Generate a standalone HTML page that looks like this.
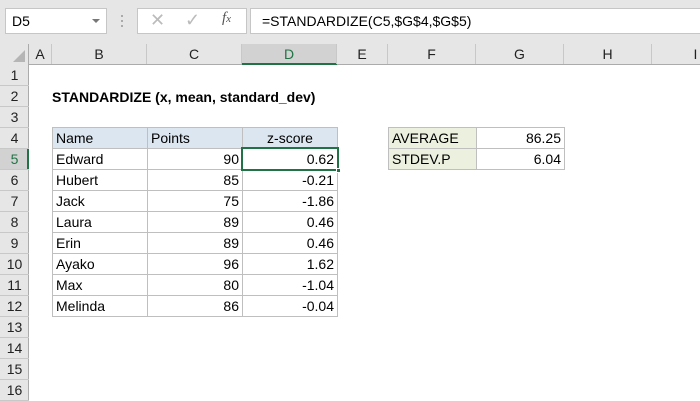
<!DOCTYPE html><html><head><style>
body{margin:0;width:700px;height:400px;overflow:hidden;background:#fff;font-family:"Liberation Sans",Arial,sans-serif;position:relative}
.a{position:absolute;box-sizing:border-box}
.t{font-size:14px;color:#000;white-space:nowrap;line-height:20px}
.ch{font-size:14px;color:#222;text-align:center;line-height:20px}
</style></head><body>
<div class="a" style="left:0;top:0;width:700px;height:44px;background:#e6e6e6"></div>
<div class="a" style="left:5px;top:8px;width:102px;height:26px;background:#fff;border:1px solid #c6c6c6"></div>
<div class="a t" style="left:12px;top:11px">D5</div>
<div class="a" style="left:92px;top:19px;width:0;height:0;border-left:4px solid transparent;border-right:4px solid transparent;border-top:4px solid #777"></div>
<div class="a" style="left:121px;top:15px;width:2px;height:2px;background:#aaa;box-shadow:0 5px #aaa,0 10px #aaa"></div>
<div class="a" style="left:137px;top:8px;width:110px;height:26px;background:#fff;border:1px solid #c6c6c6"></div>
<div class="a" style="left:150px;top:10px;font-size:18px;color:#bbb">✕</div>
<div class="a" style="left:185px;top:10px;font-size:18px;color:#bbb">✓</div>
<div class="a" style="left:222px;top:10px;font-size:15px;font-style:italic;font-family:'Liberation Serif',serif;color:#555">f<span style="font-size:11px">x</span></div>
<div class="a" style="left:250px;top:8px;width:452px;height:26px;background:#fff;border:1px solid #c6c6c6"></div>
<div class="a t" style="left:262px;top:11px">=STANDARDIZE(C5,$G$4,$G$5)</div>
<!-- col headers -->
<div class="a" style="left:0;top:44px;width:700px;height:21px;background:#e6e6e6;border-bottom:1px solid #ababab"></div>
<div class="a" style="left:0;top:44px;width:29px;height:356px;background:#e6e6e6;border-right:1px solid #ababab"></div>
<div class="a" style="left:13px;top:50px;width:0;height:0;border-left:12px solid transparent;border-bottom:12px solid #b5b5b5"></div>
<div class="a" style="left:242px;top:44px;width:95px;height:21px;background:#d2d2d2;border-bottom:2px solid #217346"></div>
<div class="a" style="left:0;top:148px;width:29px;height:21px;background:#d2d2d2;border-right:2px solid #217346"></div>
<div id="cols"></div><div id="rows"></div>
<script>
var c=[[29,52,'A'],[52,147,'B'],[147,242,'C'],[242,337,'D'],[337,388,'E'],[388,476,'F'],[476,564,'G'],[564,652,'H'],[652,740,'I']],h='';
c.forEach(function(k){h+='<div class="a ch" style="left:'+k[0]+'px;top:44px;width:'+(k[1]-k[0])+'px;height:20px;border-right:1px solid #c8c8c8;'+(k[2]=='D'?'color:#217346':'')+'">'+k[2]+'</div>'});
document.getElementById('cols').innerHTML=h;h='';
for(var i=1;i<=16;i++){h+='<div class="a ch" style="left:0;top:'+(65+(i-1)*21)+'px;width:29px;height:21px;border-bottom:1px solid #c8c8c8;line-height:21px;'+(i==5?'color:#217346':'')+'">'+i+'</div>'}
document.getElementById('rows').innerHTML=h;
</script>
<div class="a" style="left:52px;top:89px;font-size:14px;font-weight:bold">STANDARDIZE (x, mean, standard_dev)</div>
<div id="tb"></div>
<script>
var d=[['Edward',90,'0.62'],['Hubert',85,'-0.21'],['Jack',75,'-1.86'],['Laura',89,'0.46'],['Erin',89,'0.46'],['Ayako',96,'1.62'],['Max',80,'-1.04'],['Melinda',86,'-0.04']],h='';
function cell(x,y,w,txt,al,bg){return '<div class="a t" style="left:'+x+'px;top:'+y+'px;width:'+(w+1)+'px;height:22px;border:1px solid #bfbfbf;background:'+bg+';text-align:'+al+';padding:0 3px;line-height:20px">'+txt+'</div>'}
h+=cell(52,127,95,'Name','left','#dce6f1')+cell(147,127,95,'Points','left','#dce6f1')+cell(242,127,95,'z-score','center','#dce6f1');
d.forEach(function(r,i){var y=148+i*21;h+=cell(52,y,95,r[0],'left','#fff')+cell(147,y,95,r[1],'right','#fff')+cell(242,y,95,r[2],'right','#fff')});
h+=cell(388,127,88,'AVERAGE','left','#ebf1de')+cell(476,127,88,'86.25','right','#fff')+cell(388,148,88,'STDEV.P','left','#ebf1de')+cell(476,148,88,'6.04','right','#fff');
document.getElementById('tb').innerHTML=h;
</script>
<div class="a" style="left:241px;top:147px;width:98px;height:24px;border:2px solid #217346"></div>
<div class="a" style="left:336px;top:168px;width:5px;height:5px;background:#217346;border:1px solid #fff"></div>
</body></html>
